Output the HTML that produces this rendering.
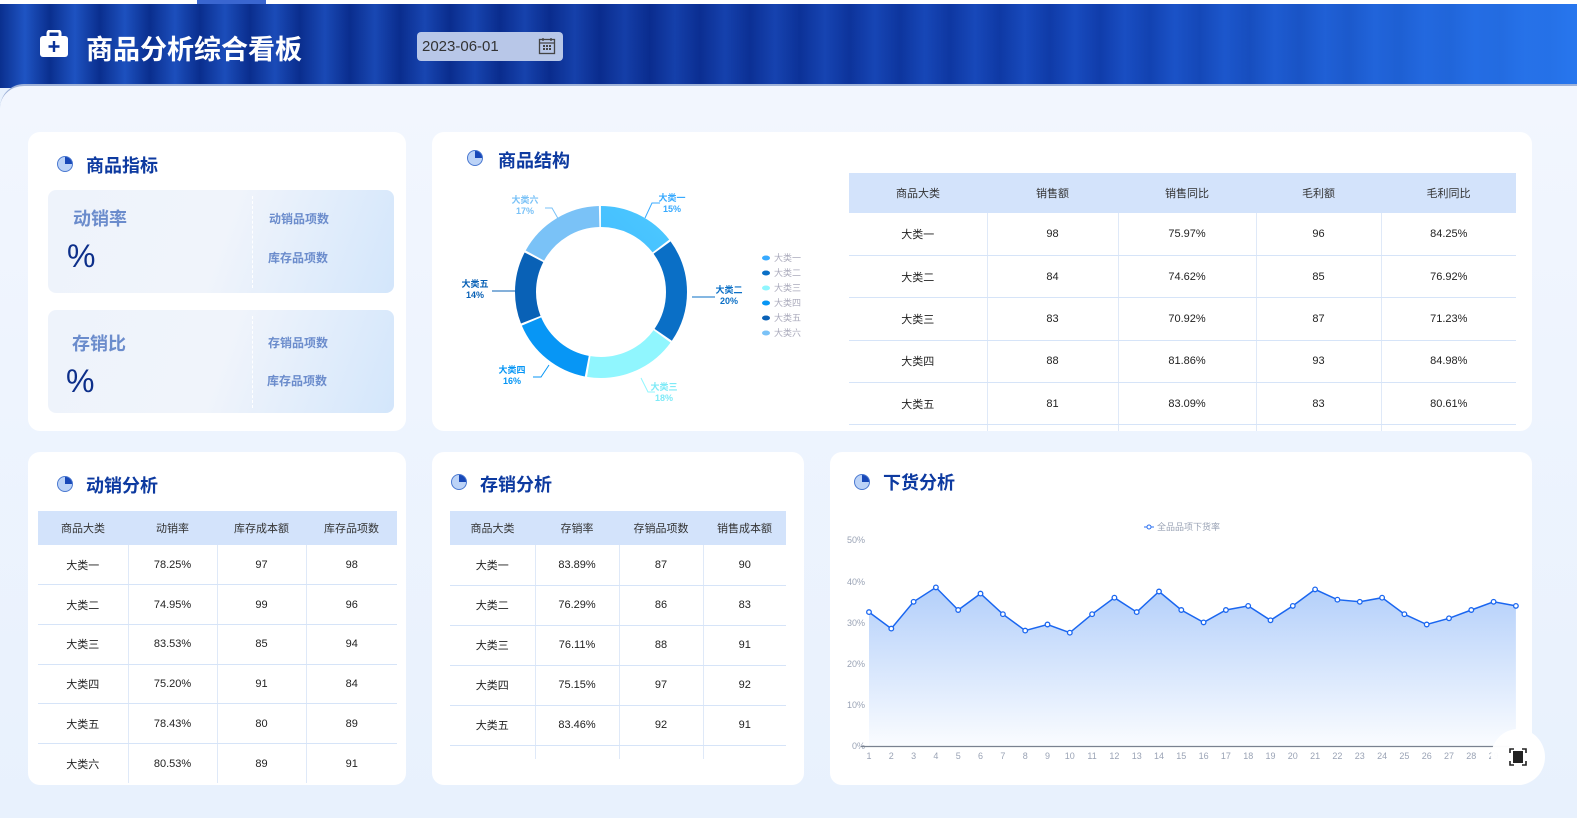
<!DOCTYPE html>
<html style="overflow:hidden;width:1577px;height:818px"><head><meta charset="utf-8">
<style>
*{margin:0;padding:0;box-sizing:border-box}
body{width:1577px;height:818px;overflow:hidden;background:#e8f1fd;font-family:"Liberation Sans","Noto Sans CJK SC",sans-serif;position:relative}
.abs{position:absolute}
.hdr{left:0;top:4px;width:1577px;height:84px;background:linear-gradient(90deg,rgba(0,0,0,0) 0%,rgba(10,40,140,.5) 40%,rgba(20,70,190,.6) 70%,rgba(40,120,240,.95) 100%),repeating-linear-gradient(90deg,#0a2f8e 0px,#1f55c4 25px,#0a2f8e 50px);}
.main{left:0;top:84px;width:1577px;height:734px;background:linear-gradient(180deg,#f2f6fe,#e8f1fd);border-top-left-radius:24px;border-top:2px solid #9fb2d8}
.panel{background:#fff;border-radius:12px}
.ttl{font-size:18px;font-weight:bold;color:#0d3aa0}
.pie{width:16px;height:16px;border-radius:50%;background:conic-gradient(#1848b8 0 25%,#bcd3f7 25% 100%);border:1px solid #4a78d0}
table{border-collapse:collapse;position:absolute;table-layout:fixed;font-size:11px;color:#222}
td,th{text-align:center;font-weight:normal}
th{background:#d3e3fb;color:#333}
td{border-right:1px solid #dfe9f8;border-bottom:1px solid #d6e4f8}
td:last-child{border-right:none}
.card{border-radius:8px;background:linear-gradient(110deg,#eef3fb 0%,#f0f4fb 50%,#d3e6fb 100%)}
.cl{color:#6b8ccc;font-size:18px;font-weight:bold}
.cs{color:#6b8ccc;font-size:12px;font-weight:bold}
.pct{color:#0d2f8a;font-size:32px}
</style></head><body>
<div class="abs" style="left:0;top:0;width:1577px;height:4px;background:#fff"></div>
<div class="abs" style="left:197px;top:0;width:69px;height:4px;background:#3a66d0"></div>
<div class="abs hdr"></div>
<div class="abs main"></div>
<svg class="abs" style="left:39px;top:30px" width="30" height="28" viewBox="0 0 30 28"><rect x="9" y="1" width="12" height="7" rx="2" fill="none" stroke="#fff" stroke-width="3"/><rect x="1" y="6" width="28" height="21" rx="3" fill="#fff"/><path d="M15 11v11M9.5 16.5h11" stroke="#0b3399" stroke-width="2.4"/></svg>
<div class="abs" style="left:86px;top:28px;color:#fff;font-size:27px;font-weight:bold">商品分析综合看板</div>
<div class="abs" style="left:417px;top:32px;width:146px;height:29px;border-radius:4px;background:#b8c7e8"></div>
<div class="abs" style="left:422px;top:38px;font-size:15px;color:#333">2023-06-01</div>
<svg class="abs" style="left:538px;top:37px" width="18" height="18" viewBox="0 0 18 18"><rect x="1.5" y="2.5" width="15" height="14" fill="none" stroke="#444" stroke-width="1.3"/><path d="M5 1v3M13 1v3M1.5 6h15" stroke="#444" stroke-width="1.3"/><g fill="#444"><rect x="5" y="8" width="2" height="2"/><rect x="8" y="8" width="2" height="2"/><rect x="11" y="8" width="2" height="2"/><rect x="5" y="11" width="2" height="2"/><rect x="8" y="11" width="2" height="2"/><rect x="11" y="11" width="2" height="2"/></g></svg>

<div class="abs panel" style="left:28px;top:132px;width:378px;height:299px"></div>
<div class="abs pie" style="left:57px;top:156px"></div>
<div class="abs ttl" style="left:86px;top:152px">商品指标</div>
<div class="abs card" style="left:48px;top:190px;width:346px;height:103px"></div>
<div class="abs" style="left:252px;top:196px;height:92px;border-left:1px dashed #fff"></div>
<div class="abs cl" style="left:73px;top:205px">动销率</div>
<div class="abs pct" style="left:67px;top:238px">%</div>
<div class="abs cs" style="left:269px;top:210px">动销品项数</div>
<div class="abs cs" style="left:268px;top:249px">库存品项数</div>
<div class="abs card" style="left:48px;top:310px;width:346px;height:103px"></div>
<div class="abs" style="left:252px;top:316px;height:92px;border-left:1px dashed #fff"></div>
<div class="abs cl" style="left:72px;top:330px">存销比</div>
<div class="abs pct" style="left:66px;top:363px">%</div>
<div class="abs cs" style="left:268px;top:334px">存销品项数</div>
<div class="abs cs" style="left:267px;top:372px">库存品项数</div>

<div class="abs panel" style="left:432px;top:132px;width:1100px;height:299px;overflow:hidden">
<table style="left:417px;top:41px;width:667px">
<colgroup><col style="width:138px"><col style="width:131px"><col style="width:138px"><col style="width:125px"><col style="width:135px"></colgroup>
<tr style="height:40px"><th>商品大类</th><th>销售额</th><th>销售同比</th><th>毛利额</th><th>毛利同比</th></tr>
<tr style="height:42.4px"><td>大类一</td><td>98</td><td>75.97%</td><td>96</td><td>84.25%</td></tr>
<tr style="height:42.4px"><td>大类二</td><td>84</td><td>74.62%</td><td>85</td><td>76.92%</td></tr>
<tr style="height:42.4px"><td>大类三</td><td>83</td><td>70.92%</td><td>87</td><td>71.23%</td></tr>
<tr style="height:42.4px"><td>大类四</td><td>88</td><td>81.86%</td><td>93</td><td>84.98%</td></tr>
<tr style="height:42.4px"><td>大类五</td><td>81</td><td>83.09%</td><td>83</td><td>80.61%</td></tr>
<tr style="height:42.4px"><td>大类六</td><td>80</td><td>80.00%</td><td>80</td><td>80.00%</td></tr>
</table>
</div>
<div class="abs pie" style="left:467px;top:150px"></div>
<div class="abs ttl" style="left:498px;top:147px">商品结构</div>
<svg class="abs" style="left:440px;top:170px" width="400" height="240" viewBox="440 170 400 240">
<defs>
<linearGradient id="g1" x1="0" y1="0" x2="1" y2="1"><stop offset="0" stop-color="#38aaff"/><stop offset="1" stop-color="#4cc9ff"/></linearGradient>
</defs>
<g transform="rotate(-90 601 292)" fill="none" stroke-width="21">
<circle cx="601" cy="292" r="75.5" stroke="url(#g1)" stroke-dasharray="69.1 405" stroke-dashoffset="0"/>
<circle cx="601" cy="292" r="75.5" stroke="#0a6fc6" stroke-dasharray="92.9 405" stroke-dashoffset="-71.1"/>
<circle cx="601" cy="292" r="75.5" stroke="#90f6fe" stroke-dasharray="83.4 405" stroke-dashoffset="-166"/>
<circle cx="601" cy="292" r="75.5" stroke="#0796f5" stroke-dasharray="73.9 405" stroke-dashoffset="-251.4"/>
<circle cx="601" cy="292" r="75.5" stroke="#0961b6" stroke-dasharray="64.4 405" stroke-dashoffset="-327.3"/>
<circle cx="601" cy="292" r="75.5" stroke="#7ac2f7" stroke-dasharray="78.6 405" stroke-dashoffset="-393.7"/>
</g>
<g fill="none" stroke-width="1">
<polyline points="645,218 652,203 660,203" stroke="#38aaff"/>
<polyline points="692,297 715,297" stroke="#0a6fc6"/>
<polyline points="641,378 648,392 655,392" stroke="#90f6fe"/>
<polyline points="549,365 541,377 533,377" stroke="#0796f5"/>
<polyline points="517,291 492,291" stroke="#0961b6"/>
<polyline points="560,222 552,208 545,208" stroke="#7ac2f7"/>
</g>
<g font-size="9" font-weight="bold" text-anchor="middle">
<text x="672" y="201" fill="#38aaff">大类一</text><text x="672" y="212" fill="#38aaff">15%</text>
<text x="729" y="293" fill="#0a6fc6">大类二</text><text x="729" y="304" fill="#0a6fc6">20%</text>
<text x="664" y="390" fill="#7eeaf7">大类三</text><text x="664" y="401" fill="#7eeaf7">18%</text>
<text x="512" y="373" fill="#0796f5">大类四</text><text x="512" y="384" fill="#0796f5">16%</text>
<text x="475" y="287" fill="#0961b6">大类五</text><text x="475" y="298" fill="#0961b6">14%</text>
<text x="525" y="203" fill="#7ac2f7">大类六</text><text x="525" y="214" fill="#7ac2f7">17%</text>
</g>
<g font-size="9" fill="#aab">
<text x="774" y="261">大类一</text><text x="774" y="276">大类二</text><text x="774" y="291">大类三</text><text x="774" y="306">大类四</text><text x="774" y="321">大类五</text><text x="774" y="336">大类六</text>
</g>
<g>
<ellipse cx="766" cy="258" rx="4" ry="2.5" fill="#38aaff"/><ellipse cx="766" cy="273" rx="4" ry="2.5" fill="#0a6fc6"/><ellipse cx="766" cy="288" rx="4" ry="2.5" fill="#90f6fe"/><ellipse cx="766" cy="303" rx="4" ry="2.5" fill="#0796f5"/><ellipse cx="766" cy="318" rx="4" ry="2.5" fill="#0961b6"/><ellipse cx="766" cy="333" rx="4" ry="2.5" fill="#7ac2f7"/>
</g>
</svg>

<div class="abs panel" style="left:28px;top:452px;width:378px;height:333px"></div>
<div class="abs pie" style="left:57px;top:476px"></div>
<div class="abs ttl" style="left:86px;top:472px">动销分析</div>
<table style="left:38px;top:511px;width:359px">
<colgroup><col style="width:90px"><col style="width:89px"><col style="width:89px"><col style="width:91px"></colgroup>
<tr style="height:34px"><th>商品大类</th><th>动销率</th><th>库存成本额</th><th>库存品项数</th></tr>
<tr style="height:39.7px"><td>大类一</td><td>78.25%</td><td>97</td><td>98</td></tr>
<tr style="height:39.7px"><td>大类二</td><td>74.95%</td><td>99</td><td>96</td></tr>
<tr style="height:39.7px"><td>大类三</td><td>83.53%</td><td>85</td><td>94</td></tr>
<tr style="height:39.7px"><td>大类四</td><td>75.20%</td><td>91</td><td>84</td></tr>
<tr style="height:39.7px"><td>大类五</td><td>78.43%</td><td>80</td><td>89</td></tr>
<tr style="height:39.7px"><td style="border-bottom:none">大类六</td><td style="border-bottom:none">80.53%</td><td style="border-bottom:none">89</td><td style="border-bottom:none">91</td></tr>
</table>

<div class="abs panel" style="left:432px;top:452px;width:372px;height:333px"></div>
<div class="abs pie" style="left:451px;top:474px"></div>
<div class="abs ttl" style="left:480px;top:471px">存销分析</div>
<table style="left:450px;top:511px;width:336px">
<colgroup><col style="width:85px"><col style="width:84px"><col style="width:84px"><col style="width:83px"></colgroup>
<tr style="height:34px"><th>商品大类</th><th>存销率</th><th>存销品项数</th><th>销售成本额</th></tr>
<tr style="height:40px"><td>大类一</td><td>83.89%</td><td>87</td><td>90</td></tr>
<tr style="height:40px"><td>大类二</td><td>76.29%</td><td>86</td><td>83</td></tr>
<tr style="height:40px"><td>大类三</td><td>76.11%</td><td>88</td><td>91</td></tr>
<tr style="height:40px"><td>大类四</td><td>75.15%</td><td>97</td><td>92</td></tr>
<tr style="height:40px"><td>大类五</td><td>83.46%</td><td>92</td><td>91</td></tr>
<tr style="height:14px"><td style="border-bottom:none"></td><td style="border-bottom:none"></td><td style="border-bottom:none"></td><td style="border-bottom:none"></td></tr>
</table>

<div class="abs panel" style="left:830px;top:452px;width:702px;height:333px"></div>
<div class="abs pie" style="left:854px;top:474px"></div>
<div class="abs ttl" style="left:883px;top:469px">下货分析</div>
<svg class="abs" style="left:830px;top:500px" width="740" height="300" viewBox="830 500 740 300">
<defs><linearGradient id="ar" x1="0" y1="0" x2="0" y2="1"><stop offset="0" stop-color="#b3cffa"/><stop offset="1" stop-color="#fafcff"/></linearGradient></defs>
<g font-size="9" fill="#9aa3b5">
<text x="847" y="543">50%</text><text x="847" y="585">40%</text><text x="847" y="626">30%</text><text x="847" y="667">20%</text><text x="847" y="708">10%</text><text x="852" y="749">0%</text>
<text x="1157" y="530">全品品项下货率</text>
</g>
<path d="M1144 527h10" stroke="#2a6ff0"/><circle cx="1149" cy="527" r="2" fill="#fff" stroke="#2a6ff0"/>
<path fill="url(#ar)" d="M869,612.1 891.3,628.6 913.6,601.8 935.9,587.4 958.2,610 980.5,593.6 1002.9,614.2 1025.2,630.6 1047.5,624.5 1069.8,632.7 1092.1,614.2 1114.4,597.7 1136.7,612.1 1159,591.5 1181.3,610 1203.6,622.4 1225.9,610 1248.2,605.9 1270.5,620.3 1292.8,605.9 1315.1,589.4 1337.4,599.7 1359.8,601.8 1382.1,597.7 1404.4,614.2 1426.7,624.5 1449,618.3 1471.3,610 1493.6,601.8 1515.9,605.9 L1515.9,746 L869,746Z"/>
<polyline fill="none" stroke="#1a66f0" stroke-width="1.5" points="869,612.1 891.3,628.6 913.6,601.8 935.9,587.4 958.2,610 980.5,593.6 1002.9,614.2 1025.2,630.6 1047.5,624.5 1069.8,632.7 1092.1,614.2 1114.4,597.7 1136.7,612.1 1159,591.5 1181.3,610 1203.6,622.4 1225.9,610 1248.2,605.9 1270.5,620.3 1292.8,605.9 1315.1,589.4 1337.4,599.7 1359.8,601.8 1382.1,597.7 1404.4,614.2 1426.7,624.5 1449,618.3 1471.3,610 1493.6,601.8 1515.9,605.9"/>
<g fill="#fff" stroke="#1a66f0" stroke-width="1.3">
<circle cx="869" cy="612.1" r="2.3"/><circle cx="891.3" cy="628.6" r="2.3"/><circle cx="913.6" cy="601.8" r="2.3"/><circle cx="935.9" cy="587.4" r="2.3"/><circle cx="958.2" cy="610" r="2.3"/><circle cx="980.5" cy="593.6" r="2.3"/><circle cx="1002.9" cy="614.2" r="2.3"/><circle cx="1025.2" cy="630.6" r="2.3"/><circle cx="1047.5" cy="624.5" r="2.3"/><circle cx="1069.8" cy="632.7" r="2.3"/><circle cx="1092.1" cy="614.2" r="2.3"/><circle cx="1114.4" cy="597.7" r="2.3"/><circle cx="1136.7" cy="612.1" r="2.3"/><circle cx="1159" cy="591.5" r="2.3"/><circle cx="1181.3" cy="610" r="2.3"/><circle cx="1203.6" cy="622.4" r="2.3"/><circle cx="1225.9" cy="610" r="2.3"/><circle cx="1248.2" cy="605.9" r="2.3"/><circle cx="1270.5" cy="620.3" r="2.3"/><circle cx="1292.8" cy="605.9" r="2.3"/><circle cx="1315.1" cy="589.4" r="2.3"/><circle cx="1337.4" cy="599.7" r="2.3"/><circle cx="1359.8" cy="601.8" r="2.3"/><circle cx="1382.1" cy="597.7" r="2.3"/><circle cx="1404.4" cy="614.2" r="2.3"/><circle cx="1426.7" cy="624.5" r="2.3"/><circle cx="1449" cy="618.3" r="2.3"/><circle cx="1471.3" cy="610" r="2.3"/><circle cx="1493.6" cy="601.8" r="2.3"/><circle cx="1515.9" cy="605.9" r="2.3"/>
</g>
<path d="M861 746.5H1516" stroke="#7a8290" stroke-width="1.2"/>
<g font-size="9" fill="#9aa3b5" text-anchor="middle">
<text x="869" y="759">1</text><text x="891.3" y="759">2</text><text x="913.6" y="759">3</text><text x="935.9" y="759">4</text><text x="958.2" y="759">5</text><text x="980.5" y="759">6</text><text x="1002.9" y="759">7</text><text x="1025.2" y="759">8</text><text x="1047.5" y="759">9</text><text x="1069.8" y="759">10</text><text x="1092.1" y="759">11</text><text x="1114.4" y="759">12</text><text x="1136.7" y="759">13</text><text x="1159" y="759">14</text><text x="1181.3" y="759">15</text><text x="1203.6" y="759">16</text><text x="1225.9" y="759">17</text><text x="1248.2" y="759">18</text><text x="1270.5" y="759">19</text><text x="1292.8" y="759">20</text><text x="1315.1" y="759">21</text><text x="1337.4" y="759">22</text><text x="1359.8" y="759">23</text><text x="1382.1" y="759">24</text><text x="1404.4" y="759">25</text><text x="1426.7" y="759">26</text><text x="1449" y="759">27</text><text x="1471.3" y="759">28</text><text x="1493.6" y="759">29</text>
</g>
<ellipse cx="1518" cy="757" rx="27" ry="28" fill="#fff" opacity=".97"/>
<g fill="none" stroke="#222" stroke-width="1.6"><path d="M1510 753v-4h4M1522 749h4v4M1526 761v4h-4M1514 765h-4v-4"/></g>
<rect x="1513" y="751" width="10" height="12" fill="#222"/>
</svg>
</body></html>
